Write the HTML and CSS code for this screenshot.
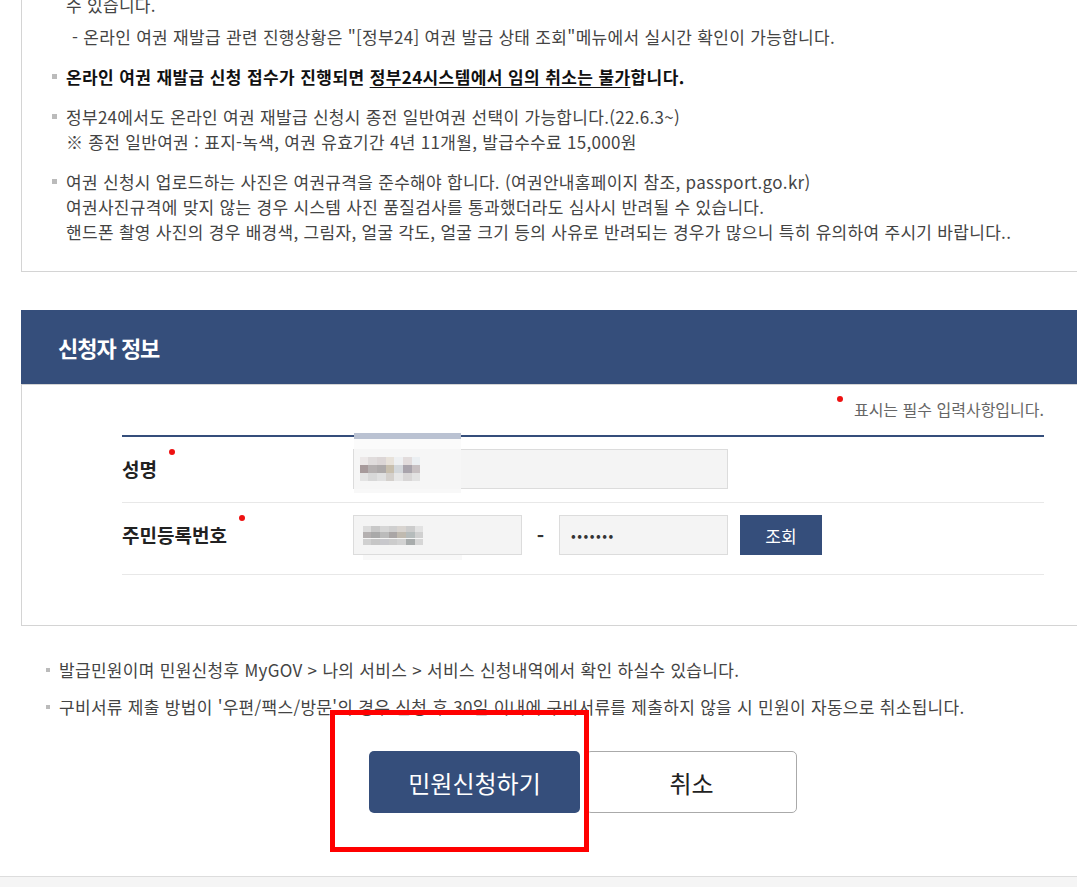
FILE: index.html
```html
<!DOCTYPE html>
<html lang="ko">
<head>
    <meta charset="UTF-8">
    <meta name="viewport" content="width=device-width, initial-scale=1.0">
    <title>여권 재발급 신청 - 신청자 정보</title>
    <link rel="stylesheet" href="styles.css">
</head>
<body>
    <div class="page">
        <div class="notice-box">
            <ul class="notice-list">
                <li class="cont">
                    수 있습니다.
                    <p class="sub">- 온라인 여권 재발급 관련 진행상황은 "[정부24] 여권 발급 상태 조회"메뉴에서 실시간 확인이 가능합니다.</p>
                </li>
                <li class="strong">온라인 여권 재발급 신청 접수가 진행되면 <u>정부24시스템에서 임의 취소는 불가</u>합니다.</li>
                <li>정부24에서도 온라인 여권 재발급 신청시 종전 일반여권 선택이 가능합니다.(22.6.3~)<br>※ 종전 일반여권 : 표지-녹색, 여권 유효기간 4년 11개월, 발급수수료 15,000원</li>
                <li>여권 신청시 업로드하는 사진은 여권규격을 준수해야 합니다. (여권안내홈페이지 참조, passport.go.kr)<br>여권사진규격에 맞지 않는 경우 시스템 사진 품질검사를 통과했더라도 심사시 반려될 수 있습니다.<br>핸드폰 촬영 사진의 경우 배경색, 그림자, 얼굴 각도, 얼굴 크기 등의 사유로 반려되는 경우가 많으니 특히 유의하여 주시기 바랍니다..</li>
            </ul>
        </div>

        <section class="apply-section">
            <h2 class="section-title">신청자 정보</h2>
            <div class="section-body">
                <p class="req-note"><span class="req-dot"></span>표시는 필수 입력사항입니다.</p>
                <table class="form-table">
                    <tr class="row-name">
                        <th>성명<span class="req-dot"></span></th>
                        <td>
                            <div class="field field-name">
                                <input type="text" title="성명">
                                <span class="mask"></span>
                                <span class="pix pix-name"></span>
                            </div>
                        </td>
                    </tr>
                    <tr class="row-rrn">
                        <th>주민등록번호<span class="req-dot"></span></th>
                        <td>
                            <div class="rrn">
                                <div class="field field-half">
                                    <input type="text" title="주민등록번호 앞자리">
                                    <span class="pix pix-rrn"></span>
                                    <span class="strip"></span>
                                </div>
                                <span class="dash">-</span>
                                <div class="field field-half">
                                    <input class="secret" type="password" value="1234567" title="주민등록번호 뒷자리">
                                </div>
                                <button class="btn-search" type="button">조회</button>
                            </div>
                        </td>
                    </tr>
                </table>
            </div>
        </section>

        <ul class="guide-list">
            <li>발급민원이며 민원신청후 MyGOV &gt; 나의 서비스 &gt; 서비스 신청내역에서 확인 하실수 있습니다.</li>
            <li>구비서류 제출 방법이 '우편/팩스/방문'의 경우 신청 후 30일 이내에 구비서류를 제출하지 않을 시 민원이 자동으로 취소됩니다.</li>
        </ul>

        <div class="btn-area">
            <span class="highlight"><button class="btn btn-primary" type="button">민원신청하기</button></span>
            <button class="btn btn-cancel" type="button">취소</button>
        </div>
    </div>
    <footer class="page-foot"></footer>
</body>
</html>
```

FILE: styles.css
```css
html, body {
    margin: 0;
    padding: 0;
    overflow: hidden;
}
body {
    font-family: "Noto Sans CJK KR", "Noto Sans", sans-serif;
    font-size: 17px;
    letter-spacing: 0.3px;
    color: #444;
    background: #fff;
    height: 887px;
}
.page {
    width: 1124px;
    margin-left: 21px;
}

/* top notice box */
.notice-box {
    margin-top: -8px;
    border: 1px solid #d4d4d4;
    border-top: 0;
    padding: 0 30px 27px 44px;
}
.notice-list {
    list-style: none;
    margin: 0;
    padding: 0;
    line-height: 25px;
}
.notice-list li {
    position: relative;
    margin-top: 15px;
}
.notice-list li::before {
    content: '';
    position: absolute;
    left: -14px;
    top: 10px;
    width: 5px;
    height: 5px;
    background: #bbb;
}
.notice-list li.cont {
    margin-top: 0;
}
.notice-list li.cont::before {
    display: none;
}
.notice-list .sub {
    margin: 7px 0 1px 6px;
}
.notice-list li.strong {
    font-weight: 700;
    color: #111;
    letter-spacing: 0.4px;
}
.notice-list u {
    text-underline-offset: 3px;
}

/* applicant section */
.apply-section {
    margin-top: 38px;
}
.section-title {
    margin: 0;
    height: 74px;
    line-height: 74px;
    padding-left: 37px;
    background: #354e7b;
    color: #fff;
    font-size: 22px;
    font-weight: 700;
    letter-spacing: -1px;
}
.section-body {
    border: 1px solid #d4d4d4;
    padding: 14px 100px 50px;
}
.req-note {
    margin: 0 0 16px;
    text-align: right;
    font-size: 16px;
    letter-spacing: 0;
    line-height: 20px;
    color: #666;
}
.req-dot {
    display: inline-block;
    width: 6px;
    height: 6px;
    border-radius: 50%;
    background: #ee1111;
    position: relative;
}
.req-note .req-dot {
    margin-right: 11px;
    top: -14px;
}
.form-table {
    width: 100%;
    border-collapse: collapse;
    border-top: 2px solid #354e7b;
}
.form-table th,
.form-table td {
    border-bottom: 1px solid #e8e8e8;
    padding: 12px 0 13px;
    vertical-align: middle;
}
.form-table .row-rrn th,
.form-table .row-rrn td {
    padding-bottom: 19px;
}
.form-table th {
    width: 231px;
    text-align: left;
    font-size: 19px;
    font-weight: 700;
    letter-spacing: 0;
    color: #222;
    line-height: 24px;
}
.form-table th .req-dot {
    margin-left: 12px;
    top: -22px;
}
.field {
    position: relative;
    width: 375px;
    height: 40px;
}
.field input {
    box-sizing: border-box;
    width: 100%;
    height: 40px;
    margin: 0;
    border: 1px solid #dcdcdc;
    background: #f4f4f4;
    padding: 0 11px;
    font-family: inherit;
    font-size: 14px;
    color: #333;
    outline: none;
}
.field input.secret {
    letter-spacing: 1.5px;
}
.field-half {
    width: 169px;
}
.rrn {
    display: flex;
    align-items: center;
}
.dash {
    width: 37px;
    text-align: center;
    font-size: 20px;
    font-weight: 700;
    color: #333;
}
.btn-search {
    margin-left: 12px;
    width: 82px;
    height: 40px;
    border: 0;
    background: #354e7b;
    color: #fff;
    font-family: inherit;
    font-size: 17px;
}

/* privacy blur patches */
.mask {
    position: absolute;
    left: 1px;
    top: -16px;
    width: 107px;
    height: 60px;
    background: linear-gradient(#bac2d2 0 6px, #fbfbfb 6px 16px, #f6f6f6 16px 56px, #f8f8f8 56px);
}
.strip {
    position: absolute;
    left: 10px;
    top: 40px;
    width: 99px;
    height: 5px;
    background: #f8f8f8;
}
.pix {
    position: absolute;
    width: 60px;
}
.pix-name {
    left: 7px;
    top: 8px;
    height: 24px;
    background:
        linear-gradient(90deg, #ece8e8 0 14%, #e0dcdc 14% 28%, #dcd6d6 28% 43%, #e8e2da 43% 57%, #eef0f2 57% 71%, #e2dcdc 71% 86%, #ebeff2 86%) top / 100% 34% no-repeat,
        linear-gradient(90deg, #a79a9b 0 14%, #b5b0b0 14% 28%, #aeaaaa 28% 43%, #c8bfae 43% 57%, #d3d7db 57% 71%, #a9a4ac 71% 86%, #c7c0c2 86%) center / 100% 34% no-repeat,
        linear-gradient(90deg, #e3e3e3 0 14%, #d8d8d8 14% 28%, #e0e0e0 28% 43%, #d4d0cc 43% 57%, #e6e6e6 57% 71%, #d8d6d6 71% 86%, #e2e2e2 86%) bottom / 100% 34% no-repeat;
}
.pix-rrn {
    left: 10px;
    top: 11px;
    height: 19px;
    background:
        linear-gradient(90deg, #dcdcdc 0 14%, #c8c8c8 14% 28%, #d6d6d6 28% 43%, #cfcfcf 43% 57%, #d8d4d0 57% 71%, #cccccc 71% 86%, #e2e2e2 86%) top / 100% 34% no-repeat,
        linear-gradient(90deg, #b4b0b0 0 14%, #a9a9a9 14% 28%, #bbbbbb 28% 43%, #aaa6a6 43% 57%, #c0bab0 57% 71%, #b6bcbc 71% 86%, #d0d0d0 86%) center / 100% 34% no-repeat,
        linear-gradient(90deg, #d0d0d0 0 14%, #c6c6c6 14% 28%, #c8c8cc 28% 43%, #cccccc 43% 57%, #d2d2d2 57% 71%, #a8acac 71% 86%, #d6d6d6 86%) bottom / 100% 34% no-repeat;
}

/* bottom guide */
.guide-list {
    list-style: none;
    margin: 31px 0 0;
    padding: 0 0 0 38px;
    line-height: 25px;
}
.guide-list li {
    position: relative;
    margin-top: 12px;
}
.guide-list li:first-child {
    margin-top: 0;
}
.guide-list li::before {
    content: '';
    position: absolute;
    left: -13px;
    top: 11px;
    width: 4px;
    height: 4px;
    background: #bbb;
}
.btn-area {
    margin-top: 32px;
    display: flex;
    justify-content: center;
    gap: 6px;
}
.highlight {
    position: relative;
    display: flex;
}
.highlight::after {
    content: '';
    position: absolute;
    left: -39px;
    top: -41px;
    right: -9px;
    bottom: -39px;
    border: 5px solid #ff0000;
    z-index: 2;
    pointer-events: none;
}
.btn {
    box-sizing: border-box;
    width: 211px;
    height: 62px;
    border-radius: 5px;
    font-family: inherit;
    font-size: 24px;
    letter-spacing: 0;
    cursor: pointer;
}
.btn-primary {
    border: 0;
    background: #354e7b;
    color: #fff;
}
.btn-cancel {
    border: 1px solid #aaa;
    background: #fff;
    color: #222;
}
.page-foot {
    margin-top: 63px;
    height: 100px;
    border-top: 1px solid #ddd;
    background: #f5f5f5;
}
```
